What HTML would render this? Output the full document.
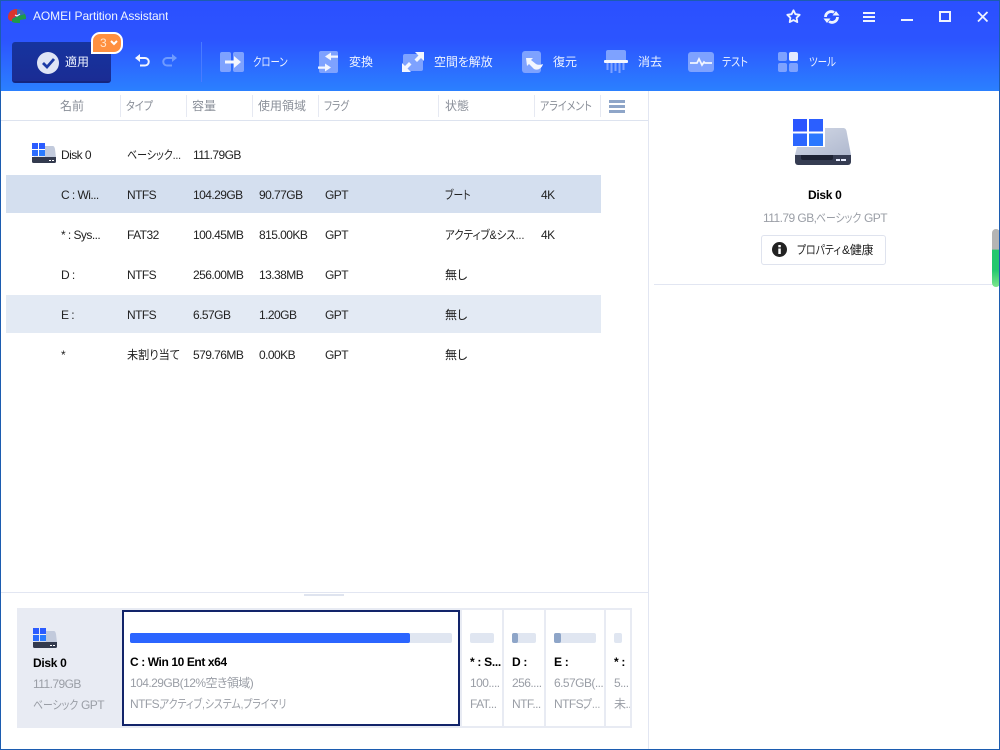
<!DOCTYPE html>
<html><head><meta charset="utf-8"><style>
*{box-sizing:border-box}
html,body{margin:0;padding:0;width:1000px;height:750px;overflow:hidden;background:#fff;font-family:"Liberation Sans","Noto Sans CJK JP",sans-serif;font-size:12px;color:#222;font-feature-settings:"palt"}
.t{position:absolute;white-space:nowrap;line-height:16px;overflow:hidden}
.n{letter-spacing:-.55px;padding-right:2px}
.s{transform:scaleX(.82);transform-origin:0 0;overflow:visible}
.b{position:absolute}
.hd{color:#8a8f99}
.g{color:#9a9ea6}
.w{color:#eef3ff}
.k{font-weight:bold;color:#000;letter-spacing:-.3px}
svg{position:absolute;overflow:visible}
</style></head><body>
<div class="b" style="left:0;top:0;width:1000px;height:91px;background:linear-gradient(#2b4fff 0,#2c55ff 45%,#2b80ff 100%)"></div>
<div class="b" style="left:0;top:0;width:1000px;height:750px;border:1px solid #1c5cb0;z-index:50"></div>

<!-- logo -->
<svg style="left:7px;top:8px" width="20" height="17" viewBox="0 0 20 17"><path d="M1 9C1 4 5 1 10 1l0 7-4 2-1 3C3 13 1 12 1 9z" fill="#d8352f"/><path d="M10 1c3 0 6 1 8 5l-8 2z" fill="#3a6fb0"/><path d="M5 11l6-3 7-2c1 2 1 3 1 5l-6 1v3c-3 0-6 0-8-1z" fill="#1f9a4a"/><path d="M8 7l2 1 3-2" stroke="#fff" fill="none"/></svg>
<div class="t w" style="left:33px;top:8px;letter-spacing:-.08px">AOMEI Partition Assistant</div>

<!-- window buttons -->
<svg style="left:786px;top:9px" width="15" height="15" viewBox="0 0 15 15"><path d="M7.500 1.300l1.900 3.900 4.300.6-3.100 3 .7 4.300-3.800-2-3.800 2 .7-4.300-3.100-3 4.300-.6z" fill="none" stroke="#eef3ff" stroke-width="1.800" stroke-linejoin="round"/></svg>
<svg style="left:823px;top:9px" width="17" height="16" viewBox="0 0 17 16"><path d="M2.500 8A5.500 5.500 0 0 1 11 3.500M14.500 8A5.500 5.500 0 0 1 6 12.500" fill="none" stroke="#eef3ff" stroke-width="2.800"/><path d="M9.500 6.500h7l-3.500-4.500zM7.500 9.500h-7l3.500 4.500z" fill="#eef3ff"/></svg>
<div class="b" style="left:863px;top:12px;width:12px;height:2px;background:#eef3ff"></div>
<div class="b" style="left:863px;top:16px;width:12px;height:2px;background:#eef3ff"></div>
<div class="b" style="left:863px;top:20px;width:12px;height:2px;background:#eef3ff"></div>
<div class="b" style="left:901px;top:19px;width:12px;height:2px;background:#eef3ff"></div>
<div class="b" style="left:939px;top:11px;width:12px;height:11px;border:2px solid #eef3ff"></div>
<svg style="left:977px;top:11px" width="12" height="12" viewBox="0 0 12 12"><path d="M1 1l9.500 9.500M10.500 1L1 10.500" stroke="#eef3ff" stroke-width="1.800"/></svg>

<!-- apply -->
<div class="b" style="left:12px;top:42px;width:99px;height:41px;border-radius:3px;background:linear-gradient(#16349f,#1a2c94);border-bottom:2px solid #15257e"></div>
<svg style="left:37px;top:52px" width="22" height="22" viewBox="0 0 22 22"><circle cx="11" cy="11" r="11" fill="#dfe4f5"/><path d="M6 11l4 4 7-8" fill="none" stroke="#1c3aa5" stroke-width="2.800"/></svg>
<div class="t w" style="left:65px;top:54px">適用</div>
<div class="b" style="left:91px;top:32px;width:32px;height:22px;background:#ff9040;border:2px solid #fff;border-radius:9px 9px 9px 0"></div>
<div class="t" style="left:100px;top:35px;color:#ffe6d0;font-size:12px">3</div>
<svg style="left:110px;top:40px" width="8" height="6" viewBox="0 0 8 6"><path d="M1 1l3 3 3-3" fill="none" stroke="#fff" stroke-width="2"/></svg>
<svg style="left:135px;top:54px" width="15" height="13" viewBox="0 0 15 13"><path d="M4 4h6a3.500 3.500 0 0 1 0 7.500H5" fill="none" stroke="#f2f5ff" stroke-width="2"/><path d="M5 0v8L0 4z" fill="#f2f5ff"/></svg>
<svg style="left:162px;top:54px" width="15" height="13" viewBox="0 0 15 13"><path d="M11 4H5a3.500 3.500 0 0 0 0 7.500h5" fill="none" stroke="#6f9bff" stroke-width="2"/><path d="M10 0v8l5-4z" fill="#6f9bff"/></svg>
<div class="b" style="left:201px;top:42px;width:1px;height:40px;background:#4a7bff"></div>

<!-- clone -->
<div class="b" style="left:220px;top:52px;width:11px;height:20px;background:#7ea2ff;border-radius:2px"></div>
<div class="b" style="left:233px;top:52px;width:11px;height:20px;background:#7ea2ff;border-radius:2px"></div>
<svg style="left:225px;top:56px" width="16" height="12" viewBox="0 0 16 12"><path d="M0 4.500h9V0l7 6-7 6V7.500H0z" fill="#f3f6ff"/></svg>
<div class="t w s" style="left:253px;top:54px;transform:scaleX(.78)">クローン</div>
<!-- convert -->
<div class="b" style="left:319px;top:51px;width:19px;height:22px;background:#7ea2ff;border-radius:2px"></div>
<svg style="left:318px;top:52px" width="21" height="21" viewBox="0 0 21 21"><path d="M20 3.500H13V0.500L7 4.500l6 4V5.800h7zM0 14.500H7V11.500l6 4-6 4V16.800H0z" fill="#f3f6ff"/></svg>
<div class="t w" style="left:349px;top:54px">変換</div>
<!-- free -->
<svg style="left:402px;top:52px" width="22" height="20" viewBox="0 0 22 20"><rect x="1" y="2" width="20" height="17" rx="2" fill="#7ea2ff"/><path d="M13 0h9v9l-3-3-4 4-2.500-2.500 4-4zM9 20H0v-9l3 3 4-4 2.500 2.500-4 4z" fill="#f3f6ff"/></svg>
<div class="t w" style="left:434px;top:54px;letter-spacing:-.1px">空間を解放</div>
<!-- recover -->
<div class="b" style="left:522px;top:51px;width:19px;height:22px;background:#7ea2ff;border-radius:3px"></div>
<svg style="left:524px;top:57px" width="20" height="15" viewBox="0 0 20 15"><path d="M2 1h7L7 3l5 4c2 1 4 1 7 0-1 4-5 7-9 5L5 7 3 9z" fill="#f3f6ff"/></svg>
<div class="t w" style="left:553px;top:54px">復元</div>
<!-- erase -->
<div class="b" style="left:606px;top:50px;width:20px;height:13px;background:#7ea2ff;border-radius:2px 2px 0 0"></div>
<div class="b" style="left:604px;top:60px;width:24px;height:3px;background:#f3f6ff;border-radius:1px"></div>
<svg style="left:606px;top:63px" width="20" height="10" viewBox="0 0 20 10"><path d="M1.500 0v7M5.500 0v10M9.500 0v8M13.500 0v10M17.500 0v7" stroke="#7ea2ff" stroke-width="2"/></svg>
<div class="t w" style="left:638px;top:54px">消去</div>
<!-- test -->
<div class="b" style="left:688px;top:52px;width:26px;height:20px;background:#7ea2ff;border-radius:3px"></div>
<svg style="left:690px;top:57px" width="22" height="10" viewBox="0 0 22 10"><path d="M0 6h7l2-4 3 6 2-3 1 1h7" fill="none" stroke="#f3f6ff" stroke-width="1.800"/></svg>
<div class="t w s" style="left:722px;top:54px;transform:scaleX(.84)">テスト</div>
<!-- tools -->
<div class="b" style="left:778px;top:52px;width:9px;height:9px;background:#7ea2ff;border-radius:2px"></div>
<div class="b" style="left:789px;top:52px;width:9px;height:9px;background:#e3eaff;border-radius:2px"></div>
<div class="b" style="left:778px;top:63px;width:9px;height:9px;background:#7ea2ff;border-radius:2px"></div>
<div class="b" style="left:789px;top:63px;width:9px;height:9px;background:#7ea2ff;border-radius:2px"></div>
<div class="t w s" style="left:809px;top:54px;transform:scaleX(.79)">ツール</div>

<!-- left panel header -->
<div class="b" style="left:648px;top:91px;width:1px;height:658px;background:#e2e6f2"></div>
<div class="b" style="left:1px;top:120px;width:647px;height:1px;background:#dde3ef"></div>
<div class="t hd" style="left:60px;top:98px">名前</div>
<div class="b" style="left:120px;top:95px;width:1px;height:22px;background:#e6e9f2"></div>
<div class="t hd s" style="left:126px;top:98px;transform:scaleX(.84)">タイプ</div>
<div class="b" style="left:186px;top:95px;width:1px;height:22px;background:#e6e9f2"></div>
<div class="t hd" style="left:192px;top:98px">容量</div>
<div class="b" style="left:252px;top:95px;width:1px;height:22px;background:#e6e9f2"></div>
<div class="t hd" style="left:258px;top:98px">使用領域</div>
<div class="b" style="left:318px;top:95px;width:1px;height:22px;background:#e6e9f2"></div>
<div class="t hd s" style="left:324px;top:98px;transform:scaleX(.8)">フラグ</div>
<div class="b" style="left:438px;top:95px;width:1px;height:22px;background:#e6e9f2"></div>
<div class="t hd" style="left:445px;top:98px">状態</div>
<div class="b" style="left:534px;top:95px;width:1px;height:22px;background:#e6e9f2"></div>
<div class="t hd s" style="left:540px;top:98px;transform:scaleX(.83)">アライメント</div>
<div class="b" style="left:600px;top:95px;width:1px;height:22px;background:#e6e9f2"></div>
<div class="b" style="left:609px;top:100px;width:16px;height:3px;background:#8ea5c8"></div>
<div class="b" style="left:609px;top:105px;width:16px;height:3px;background:#8ea5c8"></div>
<div class="b" style="left:609px;top:110px;width:16px;height:3px;background:#8ea5c8"></div>

<!-- rows -->
<div class="b" style="left:6px;top:175px;width:595px;height:38px;background:#d4dfef"></div>
<div class="b" style="left:6px;top:295px;width:595px;height:38px;background:#e3eaf4"></div>

<svg style="left:32px;top:143px" width="24" height="20" viewBox="0 0 24 20"><path d="M13 3h8c1 0 1.500 1 2 3l1 8.500H1l1-1h11z" fill="#c2cadc"/><path d="M0 14h24v4.500a1.500 1.500 0 0 1-1.500 1.500h-21A1.500 1.500 0 0 1 0 18.500z" fill="#333a4e"/><rect x="17" y="17" width="2" height="1" fill="#fff"/><rect x="20" y="17" width="2" height="1" fill="#fff"/><rect x="0" y="0" width="6" height="6" fill="#2b5cff"/><rect x="7" y="0" width="6" height="6" fill="#2b5cff"/><rect x="0" y="7" width="6" height="6" fill="#2b6cff"/><rect x="7" y="7" width="6" height="6" fill="#2b7cff"/></svg>
<div class="t n" style="left:61px;top:147px">Disk 0</div><div class="t s" style="left:127px;top:147px;transform:scaleX(.83)">ベーシック...</div><div class="t n" style="left:193px;top:147px">111.79GB</div>

<div class="t n" style="left:61px;top:187px">C : Wi...</div><div class="t n" style="left:127px;top:187px">NTFS</div><div class="t n" style="left:193px;top:187px">104.29GB</div><div class="t n" style="left:259px;top:187px">90.77GB</div><div class="t n" style="left:325px;top:187px">GPT</div><div class="t s" style="left:445px;top:187px;transform:scaleX(.81)">ブート</div><div class="t n" style="left:541px;top:187px">4K</div>

<div class="t n" style="left:61px;top:227px">* : Sys...</div><div class="t n" style="left:127px;top:227px">FAT32</div><div class="t n" style="left:193px;top:227px">100.45MB</div><div class="t n" style="left:259px;top:227px">815.00KB</div><div class="t n" style="left:325px;top:227px">GPT</div><div class="t s" style="left:445px;top:227px;transform:scaleX(.87)">アクティブ&amp;シス...</div><div class="t n" style="left:541px;top:227px">4K</div>

<div class="t n" style="left:61px;top:267px">D :</div><div class="t n" style="left:127px;top:267px">NTFS</div><div class="t n" style="left:193px;top:267px">256.00MB</div><div class="t n" style="left:259px;top:267px">13.38MB</div><div class="t n" style="left:325px;top:267px">GPT</div><div class="t" style="left:445px;top:267px">無し</div>

<div class="t n" style="left:61px;top:307px">E :</div><div class="t n" style="left:127px;top:307px">NTFS</div><div class="t n" style="left:193px;top:307px">6.57GB</div><div class="t n" style="left:259px;top:307px">1.20GB</div><div class="t n" style="left:325px;top:307px">GPT</div><div class="t" style="left:445px;top:307px">無し</div>

<div class="t" style="left:61px;top:347px">*</div><div class="t s" style="left:127px;top:347px;transform:scaleX(.93)">未割り当て</div><div class="t n" style="left:193px;top:347px">579.76MB</div><div class="t n" style="left:259px;top:347px">0.00KB</div><div class="t n" style="left:325px;top:347px">GPT</div><div class="t" style="left:445px;top:347px">無し</div>

<!-- right panel -->
<svg style="left:793px;top:119px" width="58" height="47" viewBox="0 0 58 47"><defs><linearGradient id="d" x1="0" y1="0" x2="1" y2="1"><stop offset="0" stop-color="#d3d9e6"/><stop offset="1" stop-color="#b0b9cf"/></linearGradient></defs><path d="M32 9h18c2 0 3 1 3.500 3l4.500 24H2l2-8h28z" fill="url(#d)"/><path d="M2 36h56v7a3 3 0 0 1-3 3H5a3 3 0 0 1-3-3z" fill="#353c52"/><path d="M8 36h32v3a2 2 0 0 1-2 2H10a2 2 0 0 1-2-2z" fill="#1d2233"/><rect x="43" y="40" width="4" height="2" fill="#e8edff"/><rect x="48" y="40" width="5" height="2" fill="#e8edff"/><rect x="0" y="0" width="14" height="12.500" fill="#2b55ff"/><rect x="16" y="0" width="14" height="12.500" fill="#2b5fff"/><rect x="0" y="14.500" width="14" height="12.500" fill="#2b66ff"/><rect x="16" y="14.500" width="14" height="12.500" fill="#2b78ff"/></svg>
<div class="t k" style="left:808px;top:187px">Disk 0</div>
<div class="t g n" style="left:763px;top:210px">111.79 GB,</div>
<div class="t g s" style="left:816px;top:210px">ベーシック</div>
<div class="t g n" style="left:864px;top:210px">GPT</div>
<div class="b" style="left:761px;top:235px;width:125px;height:30px;border:1px solid #dfe3ee;border-radius:3px;background:#fff"></div>
<svg style="left:772px;top:242px" width="15" height="15" viewBox="0 0 15 15"><circle cx="7.500" cy="7.500" r="7.500" fill="#222"/><rect x="6.300" y="6.500" width="2.500" height="5.500" fill="#fff"/><rect x="6.300" y="3" width="2.500" height="2.300" fill="#fff"/></svg>
<div class="t s" style="left:797px;top:242px">プロパティ</div>
<div class="t" style="left:842px;top:242px;letter-spacing:-.2px">&amp;健康</div>
<div class="b" style="left:654px;top:284px;width:346px;height:1px;background:#e2e6f2"></div>
<div class="b" style="left:992px;top:229px;width:8px;height:58px;border-radius:4px;background:linear-gradient(#b4b4b4 0,#b4b4b4 35%,#22c86e 36%,#22c86e 70%,#7ee68c 100%)"></div>

<!-- bottom -->
<div class="b" style="left:1px;top:592px;width:647px;height:1px;background:#e2e6f2"></div>
<div class="b" style="left:304px;top:594px;width:40px;height:2px;background:#dfe4ef"></div>
<div class="b" style="left:17px;top:608px;width:615px;height:120px;background:#e8ebf3"></div>

<svg style="left:33px;top:628px" width="24" height="20" viewBox="0 0 24 20"><path d="M13 3h8c1 0 1.500 1 2 3l1 8.500H1l1-1h11z" fill="#c2cadc"/><path d="M0 14h24v4.500a1.500 1.500 0 0 1-1.500 1.500h-21A1.500 1.500 0 0 1 0 18.500z" fill="#333a4e"/><rect x="17" y="17" width="2" height="1" fill="#fff"/><rect x="20" y="17" width="2" height="1" fill="#fff"/><rect x="0" y="0" width="6" height="6" fill="#2b5cff"/><rect x="7" y="0" width="6" height="6" fill="#2b5cff"/><rect x="0" y="7" width="6" height="6" fill="#2b6cff"/><rect x="7" y="7" width="6" height="6" fill="#2b7cff"/></svg>
<div class="t k" style="left:33px;top:655px">Disk 0</div>
<div class="t g n" style="left:33px;top:676px">111.79GB</div>
<div class="t g s" style="left:33px;top:697px">ベーシック</div>
<div class="t g n" style="left:81px;top:697px">GPT</div>

<div class="b" style="left:122px;top:610px;width:338px;height:116px;background:#fff;border:2px solid #12246a"></div>
<div class="b" style="left:130px;top:633px;width:322px;height:10px;background:#e0e6f1;border-radius:2px"></div>
<div class="b" style="left:130px;top:633px;width:280px;height:10px;background:#2b65ff;border-radius:2px"></div>
<div class="t k" style="left:130px;top:654px;letter-spacing:-.4px">C : Win 10 Ent x64</div>
<div class="t g n" style="left:130px;top:675px">104.29GB(12%空き領域)</div>
<div class="t g n" style="left:130px;top:696px">NTFS,</div>
<div class="t g s" style="left:160px;top:696px">アクティブ,システム,プライマリ</div>

<div class="b" style="left:462px;top:610px;width:40px;height:116px;background:#fff"></div>
<div class="b" style="left:470px;top:633px;width:24px;height:10px;background:#e0e6f1;border-radius:2px"></div>
<div class="t k" style="left:470px;top:654px;width:32px">* : S...</div>
<div class="t g n" style="left:470px;top:675px;width:32px">100....</div>
<div class="t g n" style="left:470px;top:696px;width:32px">FAT...</div>

<div class="b" style="left:504px;top:610px;width:40px;height:116px;background:#fff"></div>
<div class="b" style="left:512px;top:633px;width:24px;height:10px;background:#e0e6f1;border-radius:2px"></div>
<div class="b" style="left:512px;top:633px;width:6px;height:10px;background:#8ea5c8;border-radius:2px"></div>
<div class="t k" style="left:512px;top:654px">D :</div>
<div class="t g n" style="left:512px;top:675px;width:32px">256....</div>
<div class="t g n" style="left:512px;top:696px;width:32px">NTF...</div>

<div class="b" style="left:546px;top:610px;width:58px;height:116px;background:#fff"></div>
<div class="b" style="left:554px;top:633px;width:42px;height:10px;background:#e0e6f1;border-radius:2px"></div>
<div class="b" style="left:554px;top:633px;width:7px;height:10px;background:#8ea5c8;border-radius:2px"></div>
<div class="t k" style="left:554px;top:654px">E :</div>
<div class="t g n" style="left:554px;top:675px;width:50px">6.57GB(...</div>
<div class="t g n" style="left:554px;top:696px">NTFS,</div>
<div class="t g s" style="left:583px;top:696px">プ...</div>

<div class="b" style="left:606px;top:610px;width:24px;height:116px;background:#fff"></div>
<div class="b" style="left:614px;top:633px;width:8px;height:10px;background:#e0e6f1;border-radius:2px"></div>
<div class="t k" style="left:614px;top:654px;width:16px">* :</div>
<div class="t g n" style="left:614px;top:675px;width:16px">5...</div>
<div class="t g n" style="left:614px;top:696px;width:16px">未...</div>
</body></html>
